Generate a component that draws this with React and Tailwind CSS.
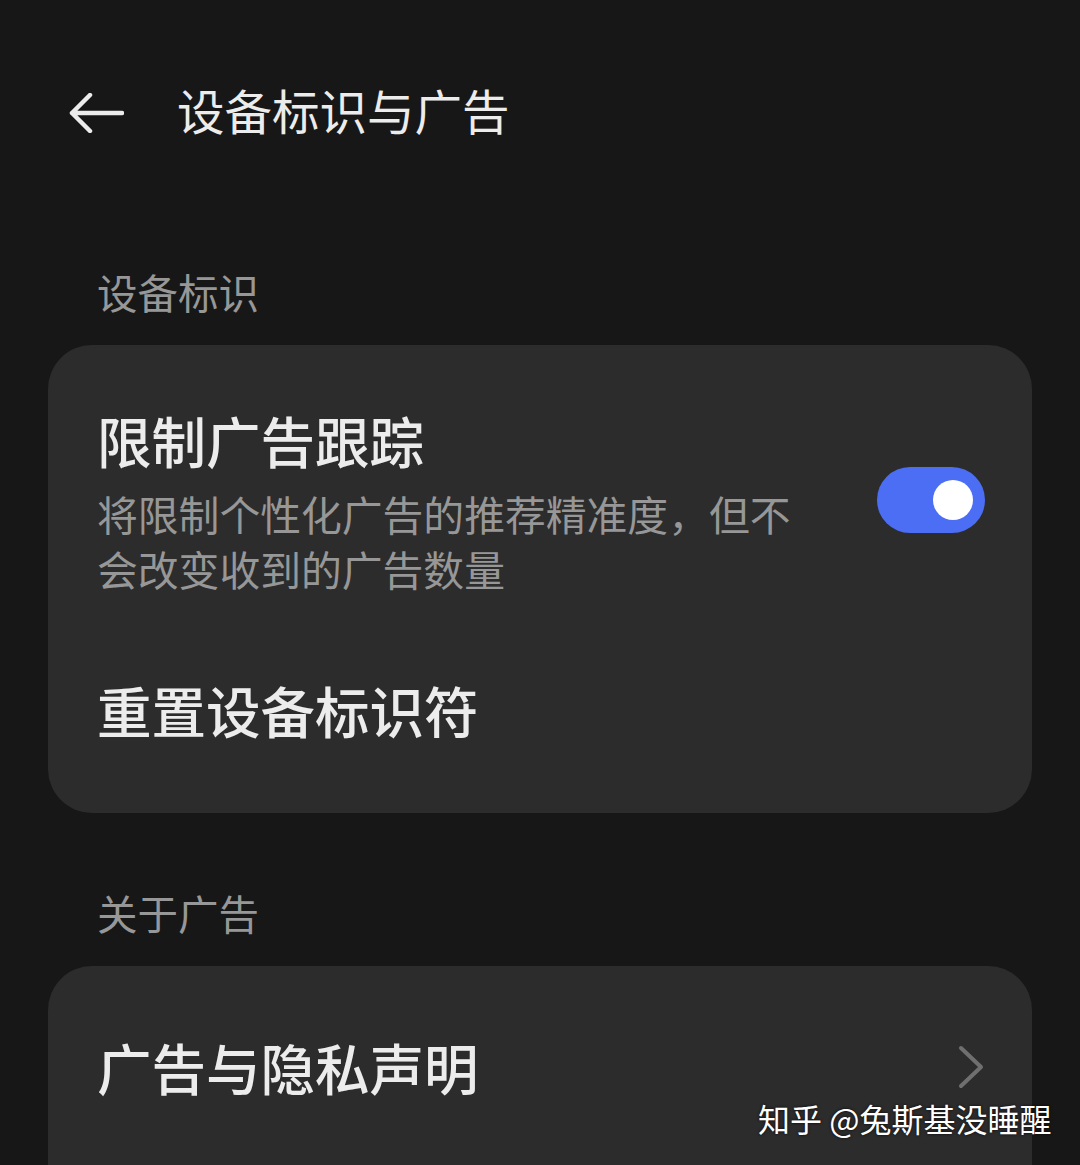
export default function App() {
  const font = { fontFamily: '"Noto Sans CJK SC", "Noto Sans", sans-serif' };
  return (
    <div style={font} className="relative w-[1080px] h-[1165px] overflow-hidden bg-[#171717] text-[#ececec]">
      {/* Header */}
      <div className="flex items-center h-[56px] mt-[82px]">
        <svg className="ml-[68px] mt-[6px]" width="56" height="40" viewBox="0 0 56 40" fill="none">
          <path d="M54 20H4M22 2L4 20l18 18" stroke="#ececec" strokeWidth="4.5" strokeLinecap="round" strokeLinejoin="round" />
        </svg>
        <div className="ml-[53px] text-[47.5px] leading-[56px]">设备标识与广告</div>
      </div>

      {/* Section 1 */}
      <div className="mt-[130px] ml-[97px] text-[40.5px] leading-[48px] text-[#979797]">设备标识</div>
      <div className="mt-[29px] mx-[48px] w-[984px] rounded-[44px] bg-[#2c2c2c] pt-[63px] pb-[71px] px-[49px]">
        <div className="flex items-center justify-between">
          <div>
            <div className="text-[54.5px] leading-[64px] font-medium">限制广告跟踪</div>
            <div className="mt-[14px] w-[705px] text-[40.8px] leading-[55px] text-[#979797]">
              将限制个性化广告的推荐精准度，但不会改变收到的广告数量
            </div>
          </div>
          <div className="mr-[-2px] mb-[4px] w-[108px] h-[66px] rounded-full bg-[#4b6ef5] flex items-center justify-end pr-[12px]">
            <div className="w-[40px] h-[40px] rounded-full bg-white" />
          </div>
        </div>
        <div className="mt-[82px] text-[54.5px] leading-[64px] font-medium">重置设备标识符</div>
      </div>

      {/* Section 2 */}
      <div className="mt-[76px] ml-[97px] text-[40.5px] leading-[48px] text-[#979797]">关于广告</div>
      <div className="mt-[29px] mx-[48px] w-[984px] h-[260px] rounded-[44px] bg-[#2c2c2c] pt-[69px] px-[49px]">
        <div className="flex items-center justify-between">
          <div className="text-[54.5px] leading-[64px] font-medium">广告与隐私声明</div>
          <svg className="mr-[-3px]" width="30" height="44" viewBox="0 0 30 44" fill="none">
            <path d="M5 3l20 19L5 41" stroke="#6f6f6f" strokeWidth="4" strokeLinecap="round" strokeLinejoin="round" />
          </svg>
        </div>
      </div>

      {/* Watermark */}
      <div className="absolute left-[758px] top-[1096px] text-[32px] leading-[44px] text-white whitespace-nowrap [text-shadow:0_0_3px_rgba(0,0,0,0.9)]">
        知乎 @兔斯基没睡醒
      </div>
    </div>
  );
}
